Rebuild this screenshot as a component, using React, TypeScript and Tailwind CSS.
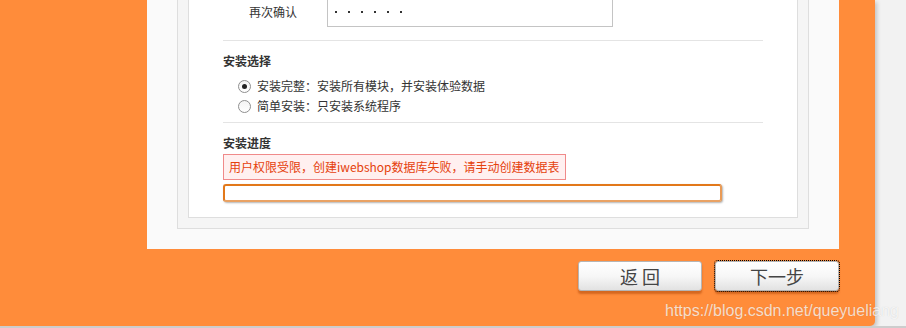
import React from 'react'

const cjk = { fontFamily: '"Noto Sans CJK SC", "Noto Sans", sans-serif' }

function Radio({ checked }: { checked?: boolean }) {
  return (
    <span className="flex h-[13px] w-[13px] items-center justify-center rounded-full border border-[#8f8f8f] bg-gradient-to-b from-[#f4f4f4] to-white">
      {checked && <span className="h-[5px] w-[5px] rounded-full bg-[#222]" />}
    </span>
  )
}

function Button({ label, focused }: { label: string; focused?: boolean }) {
  return (
    <button
      className={`flex h-[30px] w-[125px] items-center justify-center rounded-[3px] border border-[#b5b5b5] bg-gradient-to-b from-white via-[#f7f7f7] to-[#e2e2e2] text-[18px] text-[#444] shadow-[0_3px_2px_rgba(160,60,0,0.45)] ${
        focused ? 'outline-1 outline-dotted outline-black' : ''
      }`}
      style={cjk}
    >
      {label}
    </button>
  )
}

export default function App() {
  return (
    <div className="relative h-[328px] w-[906px] overflow-hidden bg-[#f2f2f2]" style={cjk}>
      <div className="h-[326px] w-[875px] rounded-br-[5px] bg-[#ff8c3a] pl-[147px] pr-[36px] shadow-[2px_2px_4px_rgba(0,0,0,0.2)]">
        {/* panel */}
        <div className="flex h-[249px] flex-col justify-end overflow-hidden bg-[#fafafa] px-[30px] pb-[20px]">
          <div className="border border-[#dedede] bg-[#f5f5f5] p-[10px]">
            <div className="border border-[#dedede] bg-white px-[34px] pb-[15px] text-[12px] text-[#333]">
              <div className="flex h-[31px] items-center">
                <div className="w-[104px] pl-[26px]">再次确认</div>
                <div className="flex h-[31px] w-[286px] items-center gap-[11px] border border-[#c4c4c4] bg-white pl-[7px]">
                  {[0, 1, 2, 3, 4, 5].map((i) => (
                    <span key={i} className="h-[2px] w-[2px] bg-[#333]" />
                  ))}
                </div>
              </div>
              <div className="mt-[13px] border-t border-[#e4e4e4]" />
              <div className="mt-[10px] h-[20px] font-bold leading-[20px]">安装选择</div>
              <div className="mt-[5px] flex h-[20px] items-center gap-[6px] pl-[15px]">
                <Radio checked />
                <span>安装完整：安装所有模块，并安装体验数据</span>
              </div>
              <div className="flex h-[20px] items-center gap-[6px] pl-[15px]">
                <Radio />
                <span>简单安装：只安装系统程序</span>
              </div>
              <div className="mt-[6px] border-t border-[#e4e4e4]" />
              <div className="mt-[10px] h-[20px] font-bold leading-[20px]">安装进度</div>
              <div className="mt-[1px] flex">
                <div className="flex h-[26px] items-center border border-[#f08a8a] bg-[#fff0f0] px-[5px] text-[#e5410c]">
                  用户权限受限，创建iwebshop数据库失败，请手动创建数据表
                </div>
              </div>
              <div className="mt-[4px] h-[18px] w-[499px] rounded-[3px] border-2 border-[#e2781a] border-b-[#e9a264] border-r-[#e99a55] bg-white shadow-[1px_1px_2px_rgba(0,0,0,0.3)]" />
            </div>
          </div>
        </div>
        {/* buttons */}
        <div className="mt-[12px] flex gap-[13px] pl-[431px]">
          <Button label="返 回" />
          <Button label="下一步" focused />
        </div>
      </div>
      <div className="h-[2px] bg-[#cdcdcd]" />
      <div
        className="absolute left-[665px] top-[299px] whitespace-nowrap text-[16px] text-white/75 [text-shadow:0_0_1px_rgba(0,0,0,0.15)]"
        style={{ fontFamily: '"Liberation Sans", Arial, sans-serif' }}
      >
        https://blog.csdn.net/queyueliang
      </div>
    </div>
  )
}
